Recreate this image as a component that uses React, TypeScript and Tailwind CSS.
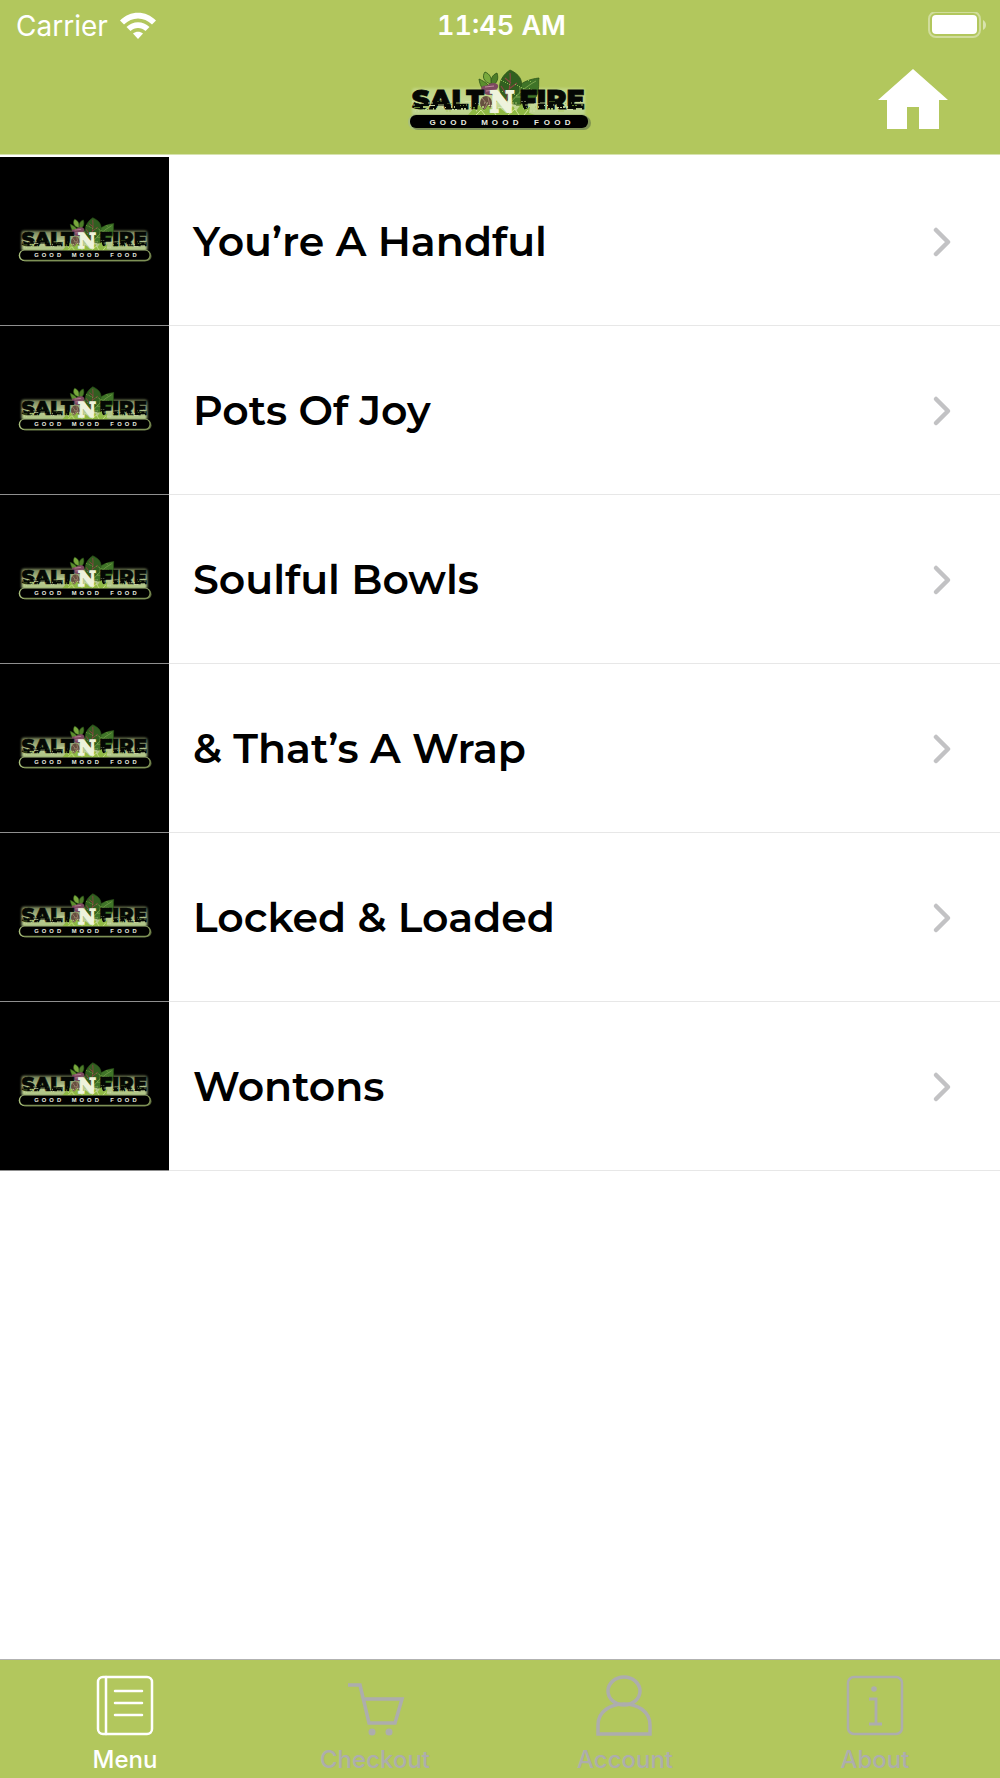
import { useId } from "react";
import type { ReactNode } from "react";

const categories = [
  "You’re A Handful",
  "Pots Of Joy",
  "Soulful Bowls",
  "& That’s A Wrap",
  "Locked & Loaded",
  "Wontons",
];

// Bits of foliage that eat into the lower half of the wordmark.
const specks = Array.from({ length: 120 }, (_, i) => ({
  x: 14 + ((i * 37) % 171),
  y: 46 + ((i * 29) % 10),
  w: 1 + (i % 3),
  tone: i % 4,
}));
const tones = ["#dce8b4", "#b6cf78", "#6f9436", "#c7d99a"];

function Logo({ className }: { className: string }) {
  const id = useId();
  return (
    <svg viewBox="8 14 188 62" className={className} role="img" aria-label="Salt N Fire, Good Mood Food">
      <defs>
        <linearGradient id={`${id}haze`} x1="0" y1="0" x2="0" y2="1">
          <stop offset="0" stopColor="#c8dc94" stopOpacity="0.6" />
          <stop offset="0.55" stopColor="#c9dca0" stopOpacity="0.9" />
          <stop offset="1" stopColor="#b9d18c" stopOpacity="0.95" />
        </linearGradient>
        <filter id={`${id}soft`} x="-10%" y="-20%" width="120%" height="140%">
          <feGaussianBlur stdDeviation="1.2" />
        </filter>
      </defs>
      <rect x="14" y="33" width="173" height="28" rx="3" fill={`url(#${id}haze)`} filter={`url(#${id}soft)`} />
      <rect x="10" y="59" width="182" height="16" rx="8" fill="#a9bf7c" />
      <rect x="13" y="61" width="180" height="14" rx="7" fill="#6c7d46" opacity="0.7" />

      <g stroke="#2c5418" strokeWidth="0.8">
        <path d="M95 40C86 38 82 32 81 24C88 27 93 31 95 40Z" fill="#5c8f2e" />
        <path d="M93 29C85 27 84 21 87 17C92 19 94 23 93 29Z" fill="#79a93d" />
        <path d="M94 31C92 24 94 20 99 18C101 24 99 28 94 31Z" fill="#4d7d29" />
        <path d="M112 48C113 36 122 25 141 23C140 28 142 34 138 42C131 49 120 51 112 48Z" fill="#3f7428" />
        <path d="M108 46C98 36 100 23 112 15C121 19 125 25 123 32C120 40 114 43 108 46Z" fill="#315f20" />
      </g>
      <path d="M108 46C112 35 113 27 112 18M109 40L103 31M111 34L119 28M113 28L107 23" stroke="#8a4543" strokeWidth="1.2" fill="none" />
      <path d="M113 47C119 40 127 32 138 26M122 38V32M126 34L137 36M118 42H130" stroke="#89ae58" strokeWidth="0.8" fill="none" />
      <g fill="#8dbb52">
        {specks.slice(0, 24).map((_, i) => (
          <rect key={i} x={103 + ((i * 7) % 33)} y={25 + ((i * 11) % 18)} width="1" height="1" />
        ))}
      </g>
      <path d="M84 36C81 29 89 32 91 29C99 26 103 31 98 35C97 41 87 42 84 36Z" fill="#7d4a60" />
      <path d="M87 32L96 31M88 36L98 35" stroke="#c08a9c" strokeWidth="1" />
      <ellipse cx="88" cy="48" rx="6" ry="7" fill="#66503f" />
      <path d="M84 43L89 49L86 55M90 42L92 51" stroke="#b38c80" strokeWidth="0.8" fill="none" />

      <g fontFamily="Montserrat, Inter, sans-serif" fontWeight="900" fontSize="27" fill="#050804" stroke="#050804" strokeWidth="0.8">
        <text x="50" y="54" textAnchor="middle">SALT</text>
        <text x="154" y="54" textAnchor="middle">FIRE</text>
      </g>
      {specks.map((s, i) => (
        <rect key={i} x={s.x} y={s.y} width={s.w} height={1 + (i % 2)} fill={tones[s.tone]} opacity={s.y > 49 ? 0.9 : 0.45} />
      ))}
      <path
        d="M70 60L76 53L79 57L80 49L86 56L90 50L96 58L102 53L108 58L115 51L118 56L124 48L126 55L132 52L131 58L137 60Z"
        fill="#8fb944"
      />
      <path d="M78 60L83 55L87 60M98 60L94 54M110 60L117 54L121 60M126 60L130 55" stroke="#d3e69a" strokeWidth="1" fill="none" />
      <text
        x="104"
        y="57"
        textAnchor="middle"
        fontFamily="'DejaVu Serif', serif"
        fontWeight="700"
        fontSize="27"
        fill="#eef3dc"
        stroke="#eef3dc"
        strokeWidth="2"
      >
        N
      </text>

      <rect x="12" y="60" width="178" height="13" rx="6" fill="#000" />
      <g fontFamily="'Liberation Sans', sans-serif" fontWeight="700" fontSize="8" fill="#e9ece0">
        {"GOOD MOOD FOOD".split("").map((letter, i) => (
          <text key={i} x={34.5 + i * 10.4} y="69.5" textAnchor="middle">
            {letter}
          </text>
        ))}
      </g>
    </svg>
  );
}

function Tab({ label, active = false, children }: { label: string; active?: boolean; children: ReactNode }) {
  return (
    <button
      type="button"
      aria-current={active ? "page" : undefined}
      className={`flex flex-1 flex-col items-center gap-2 text-2xl font-medium ${active ? "text-white" : "text-[#adadad]"}`}
    >
      <svg viewBox="0 0 60 64" className="h-16 w-[60px]" fill="none" stroke="currentColor" aria-hidden="true">
        {children}
      </svg>
      <span className="leading-7">{label}</span>
    </button>
  );
}

export default function App() {
  return (
    <div className="flex min-h-screen flex-col bg-white font-[Inter,'Liberation_Sans',sans-serif] text-black">
      <header className="border-b border-[#d7e3ae] bg-[#b2c75d] text-white">
        <div className="grid h-[50px] grid-cols-3 items-center pt-0.5 pr-[13px] pl-4 text-[28px]">
          <div className="flex items-center gap-3">
            <span>Carrier</span>
            <svg viewBox="0 0 36 28" className="h-7 w-9" fill="currentColor" aria-label="Wi-Fi">
              <path d="M0 8.5C10-2 26-2 36 8.5L32 12.5C24 4.5 12 4.5 4 12.5Z" />
              <path d="M6.500 15C13 8.500 23 8.500 29.500 15L25.500 19C21.500 15 14.500 15 10.500 19Z" />
              <path d="M13 21.500C16 19 20 19 23 21.500L18 27Z" />
            </svg>
          </div>
          <span className="text-center text-[27px] font-semibold tabular-nums">11:45 AM</span>
          <svg viewBox="0 0 60 28" className="h-7 w-[60px] justify-self-end" aria-label="Battery full">
            <rect x="2" y="0" width="51" height="25" rx="7" fill="none" stroke="#fff" strokeOpacity="0.4" strokeWidth="2" />
            <rect x="5" y="3" width="45" height="19" rx="4" fill="#fff" />
            <path d="M56 8C60 10 60 16 56 18Z" fill="#fff" fillOpacity="0.5" />
          </svg>
        </div>
        <div className="grid h-[104px] grid-cols-3 items-center px-12 pb-1">
          <Logo className="col-start-2 h-[62px] w-[188px] justify-self-center" />
          <button type="button" aria-label="Home" className="justify-self-end">
            <svg viewBox="0 0 78 64" className="h-16 w-[78px]" fill="currentColor" aria-hidden="true">
              <path d="M39 1L74 32H65V61H45V39H33V61H13V32H4Z" />
            </svg>
          </button>
        </div>
      </header>

      <main className="flex-1 pt-0.5">
        <ul>
          {categories.map((name) => (
            <li key={name}>
              <button type="button" className="flex w-full items-stretch text-left">
                <span className="flex h-[169px] w-[169px] shrink-0 items-center justify-center border-b border-[#8f8f8f] bg-black pb-1 pl-0.5">
                  <Logo className="h-[45px] w-[137px]" />
                </span>
                <span className="flex flex-1 items-center justify-between border-b border-[#e7e7e7] pt-0.5 pr-[46px] pl-6">
                  <span className="font-[Montserrat,Inter,sans-serif] text-[41px] font-semibold">{name}</span>
                  <svg viewBox="0 0 22 32" className="h-8 w-[22px]" fill="none" stroke="#c2c2c4" aria-hidden="true">
                    <path d="M4 4L16 16L4 28" strokeWidth="4.500" strokeLinecap="round" strokeLinejoin="round" />
                  </svg>
                </span>
              </button>
            </li>
          ))}
        </ul>
      </main>

      <nav className="flex border-t border-[#b2b2b2] bg-[#b2c75d] pt-3.5 pb-1" aria-label="Main">
        <Tab label="Menu" active>
          <rect x="3" y="3" width="54" height="57" rx="5" strokeWidth="2.500" />
          <path d="M11 3V60M20 17H47M20 29H47M20 41H47" strokeWidth="2.500" strokeLinecap="round" />
        </Tab>
        <Tab label="Checkout">
          <path d="M3 11H15L24 49H50L57 25H20" strokeWidth="3.500" />
          <circle cx="27" cy="58" r="3.500" fill="currentColor" stroke="none" />
          <circle cx="44" cy="58" r="3.500" fill="currentColor" stroke="none" />
        </Tab>
        <Tab label="Account">
          <ellipse cx="29" cy="17" rx="16" ry="14" strokeWidth="3.500" />
          <path d="M3 60V51C3 23 55 23 55 51V60Z" strokeWidth="3.500" />
        </Tab>
        <Tab label="About">
          <rect x="3" y="3" width="54" height="57" rx="6" strokeWidth="2.500" />
          <circle cx="29" cy="15" r="2.800" fill="currentColor" stroke="none" />
          <path d="M24 25H31V50M24 50H37" strokeWidth="2.800" />
        </Tab>
      </nav>
    </div>
  );
}
